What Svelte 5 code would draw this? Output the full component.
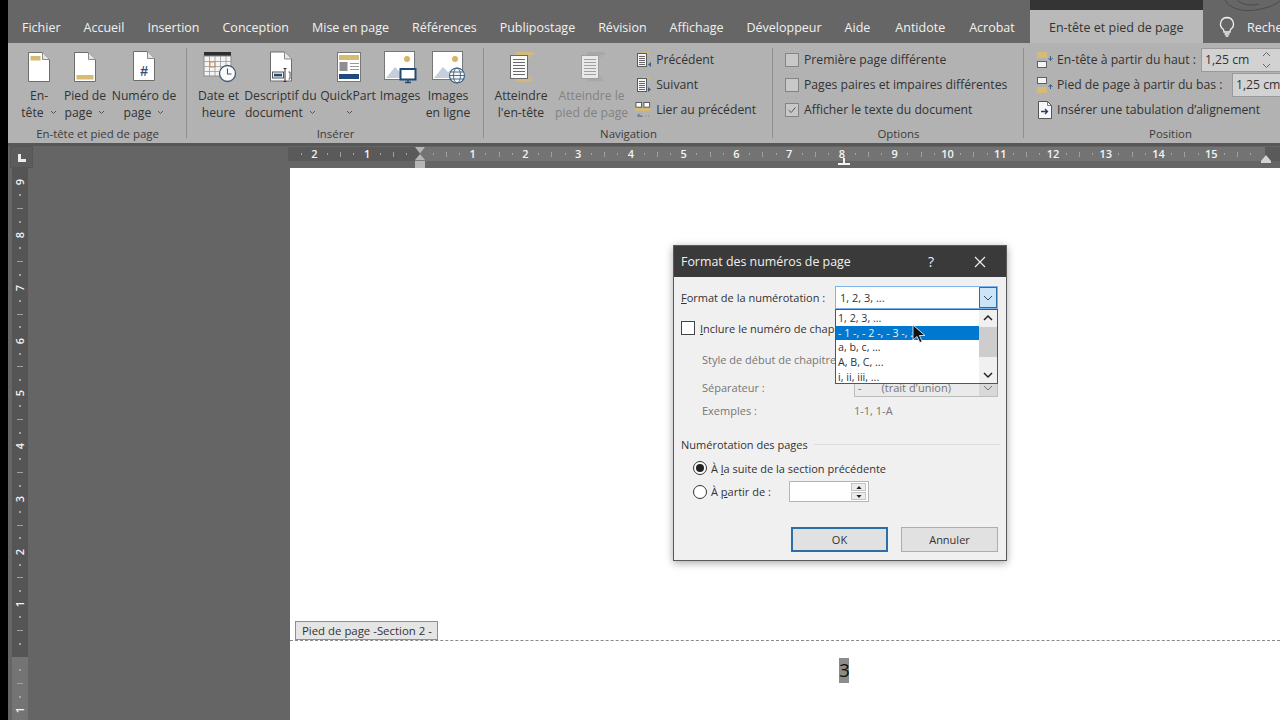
<script>
  const tabs = ['Fichier','Accueil','Insertion','Conception','Mise en page','Références','Publipostage','Révision','Affichage','Développeur','Aide','Antidote','Acrobat'];
  const step = (k) => (k % 4 === 0 ? 'num' : k % 2 === 0 ? 'dash' : 'dot');
  const range = (a, b) => { const r = []; if (a <= b) { for (let i = a; i <= b; i++) r.push(i); } else { for (let i = a; i >= b; i--) r.push(i); } return r; };
  const hLeft = range(-9, -1);
  const hMain = range(1, 63);
  const vTop = range(36, 1);
  const vLow = range(-1, -5);
</script>

{#snippet chev()}
  <svg class="chev" viewBox="0 0 7 5"><path d="M1 1l2.500 2.500L6 1" fill="none" stroke="#555" stroke-width="1"/></svg>
{/snippet}

{#snippet tick(k)}
  <span class="cell">
    {#if step(k) === 'num'}<b>{Math.abs(k / 4)}</b>{:else}<i class={step(k)}></i>{/if}
  </span>
{/snippet}

{#snippet sheet(bar)}
  <svg class="ic22" viewBox="0 0 22 30">
    <path d="M.5.5h14l7 7v22H.5z" fill="#fff" stroke="#6d6d6d"/>
    <path d="M14.500.5v7h7" fill="#e4e4e4" stroke="#8a8a8a"/>
    {#if bar === 'top'}<rect x="2.500" y="4" width="10" height="4.500" fill="#d6bb72"/>{/if}
    {#if bar === 'bottom'}<rect x="2.500" y="23" width="17" height="4.500" fill="#d6bb72"/>{/if}
  </svg>
{/snippet}

{#snippet gotoDoc(gold, paper, line)}
  <svg class="ic30" viewBox="0 0 30 32">
    <path d="M10 1h18v3H10zM10 27.500h16v3H10z" fill={gold} opacity=".85"/>
    <path d="M22 4h3v3h-3zM22 24.500h3v3h-3z" fill={gold} opacity=".4"/>
    <rect x="4.500" y="4.500" width="17" height="23" fill={paper} stroke={line}/>
    <path d="M7 8.500h12M7 11.500h12M7 14.500h12M7 17.500h12M7 20.500h12M7 23.500h12" stroke={line} stroke-width="1"/>
  </svg>
{/snippet}

{#snippet tinyDoc(up)}
  <svg class="ic16" viewBox="0 0 16 18">
    <path d="M6 1h7v2H6z" fill="#d6bb72"/>
    <rect x="1.500" y="2.500" width="9" height="13" fill="#f5f5f5" stroke="#5a5a5a"/>
    <path d="M3 5.500h6M3 7.500h6M3 9.500h6M3 11.500h6M3 13.500h6" stroke="#666"/>
    {#if up}<path d="M15 11v5l-3-2.500z" fill="#3a6288"/>{:else}<path d="M12 11v5l3-2.500z" fill="#3a6288"/>{/if}
  </svg>
{/snippet}

{#snippet gapIcon(top)}
  <svg class="ic18" viewBox="0 0 18 18">
    {#if top}
      <rect x="1" y="1" width="10" height="6" fill="#d6bb72"/>
      <rect x="1.500" y="10.500" width="9" height="6" fill="#f4f4f4" stroke="#5f5f5f"/>
      <path d="M14.500 5v4M12.500 7l2 2.500 2-2.500" fill="none" stroke="#3a6288"/>
    {:else}
      <rect x="1.500" y="1.500" width="9" height="6" fill="#f4f4f4" stroke="#5f5f5f"/>
      <rect x="1" y="11" width="10" height="6" fill="#d6bb72"/>
      <path d="M14.500 13V9M12.500 11l2-2.500 2 2.500" fill="none" stroke="#3a6288"/>
    {/if}
  </svg>
{/snippet}

<div class="screen">
  <div class="strip"></div>
  <div class="word">
    <header class="tabbar">
      {#each tabs as t}<span class="tab">{t}</span>{/each}
      <span class="tab active">En-tête et pied de page</span>
      <svg class="bulb" viewBox="0 0 18 22"><path d="M9 1.500a6.500 6.500 0 0 0-4 11.600c.8.700 1 1.700 1 2.900h6c0-1.200.2-2.200 1-2.900A6.500 6.500 0 0 0 9 1.500z" fill="none" stroke="#f2f2f2" stroke-width="1.300"/><path d="M6.500 18h5M7.500 20h3" stroke="#f2f2f2" stroke-width="1.300"/></svg>
      <span class="tab search">Rechercher</span>
      <svg class="swirl" viewBox="0 0 60 14"><path d="M2 0c4 8 16 12 30 10S54 4 58 0M14 0c5 5 14 6 22 4" fill="none" stroke="#4b4b4b"/></svg>
    </header>

    <section class="ribbon">
      <div class="group g1">
        <div class="items">
          <div class="big w46">{@render sheet('top')}<span>En-<br/>tête {@render chev()}</span></div>
          <div class="big w46">{@render sheet('bottom')}<span>Pied de<br/>page {@render chev()}</span></div>
          <div class="big w72">
            <div class="numdoc">{@render sheet('')}<em>#</em></div>
            <span>Numéro de<br/>page {@render chev()}</span>
          </div>
        </div>
        <div class="glabel">En-tête et pied de page</div>
      </div>

      <div class="group g2">
        <div class="items">
          <div class="big w47">
            <svg class="ic34" viewBox="0 0 34 32">
              <rect x="1" y="1" width="27" height="4" fill="#2e2e2e"/>
              <rect x="1" y="5" width="27" height="20" fill="#f4f4f4" stroke="#8c8c8c"/>
              <path d="M1 10.500h27M1 15.500h27M1 20.500h27M6.500 5v20M12 5v20M17.500 5v20M23 5v20" stroke="#9a9a9a" stroke-width=".8"/>
              <rect x="7" y="11" width="5" height="5" fill="none" stroke="#c98f5e"/>
              <circle cx="24.500" cy="22.500" r="8" fill="#fafafa" stroke="#44596f" stroke-width="1.300"/>
              <path d="M24.500 17.500v5.500h4" fill="none" stroke="#44596f" stroke-width="1.100"/>
            </svg>
            <span>Date et<br/>heure</span>
          </div>
          <div class="big w77">
            <svg class="ic26" viewBox="0 0 26 31">
              <path d="M2.500.500h14l7 7v22h-21z" fill="#fff" stroke="#6d6d6d"/>
              <path d="M16.500.500v7h7" fill="#e4e4e4" stroke="#8a8a8a"/>
              <rect x="4.500" y="20.500" width="11" height="6" fill="#f2f2f2" stroke="#555"/>
              <rect x="6" y="22.300" width="8" height="2.600" fill="#21457c"/>
              <path d="M15.500 17h3M17 17v13M15.500 30h3" stroke="#333" fill="none"/>
              <path d="M20.500 20.500h1.500v7h-1.500" stroke="#555" fill="none"/>
            </svg>
            <span>Descriptif du<br/>document {@render chev()}</span>
          </div>
          <div class="big w58">
            <svg class="ic24" viewBox="0 0 24 30">
              <rect x=".5" y=".5" width="23" height="29" fill="#fff" stroke="#777"/>
              <rect x="2" y="3" width="20" height="5" fill="#d6bb72"/>
              <rect x="2.500" y="10" width="8" height="9" fill="#8f8f8f"/>
              <path d="M13 11.500h9M13 14.500h9M13 17.500h9" stroke="#999"/>
              <rect x="2" y="22" width="20" height="5" fill="#1f4a80"/>
            </svg>
            <span>QuickPart<br/>{@render chev()}</span>
          </div>
          <div class="big w46">
            <svg class="ic32" viewBox="0 0 32 32">
              <rect x=".5" y=".5" width="30" height="28" fill="#fff" stroke="#777"/>
              <circle cx="23" cy="8" r="3" fill="#d9b36a"/>
              <path d="M2 27l9-11 5 5 3-2 6 8z" fill="#c3cfdc"/>
              <rect x="16.500" y="18" width="15" height="10.500" fill="#fff" stroke="#1f4a72" stroke-width="2"/>
              <path d="M21 31.500h6M24 29v2.500" stroke="#1f4a72" stroke-width="1.400"/>
            </svg>
            <span>Images</span>
          </div>
          <div class="big w50">
            <svg class="ic32" viewBox="0 0 32 32">
              <rect x=".5" y=".5" width="30" height="28" fill="#fff" stroke="#777"/>
              <circle cx="23" cy="8" r="3" fill="#d9b36a"/>
              <path d="M2 27l9-11 5 5 3-2 6 8z" fill="#c3cfdc"/>
              <circle cx="25" cy="24.500" r="7.500" fill="#f4f6f8" stroke="#3c5f80" stroke-width="1.100"/>
              <ellipse cx="25" cy="24.500" rx="3.500" ry="7.500" fill="none" stroke="#3c5f80" stroke-width=".9"/>
              <path d="M17.500 24.500h15M18.500 21h13M18.500 28h13" stroke="#3c5f80" stroke-width=".9"/>
            </svg>
            <span>Images<br/>en ligne</span>
          </div>
        </div>
        <div class="glabel">Insérer</div>
      </div>

      <div class="group g3">
        <div class="items">
          <div class="big w68">{@render gotoDoc('#d6bb72', '#fafafa', '#6a6a6a')}<span>Atteindre<br/>l'en-tête</span></div>
          <div class="big w72 off">{@render gotoDoc('#a6a6a6', '#e9e9e9', '#a0a0a0')}<span>Atteindre le<br/>pied de page</span></div>
          <div class="smalls">
            <div class="row">{@render tinyDoc(true)}Précédent</div>
            <div class="row">{@render tinyDoc(false)}Suivant</div>
            <div class="row link">
              <svg class="ic16" viewBox="0 0 17 18">
                <rect x="1" y="1" width="6" height="5" fill="#fff" stroke="#555"/>
                <rect x="9.500" y="1" width="6" height="5" fill="#fff" stroke="#555"/>
                <rect x="0" y="7" width="16.500" height="3" fill="#d6bb72"/>
                <path d="M3 15.500h5M5 13l-2.500 2.500" stroke="#2f5f8c" fill="none"/>
                <path d="M11 15.500h1M14 15.500h1" stroke="#777"/>
              </svg>
              Lier au précédent
            </div>
          </div>
        </div>
        <div class="glabel">Navigation</div>
      </div>

      <div class="group g4">
        <div class="items col">
          <div class="row"><i class="rbox"></i>Première page différente</div>
          <div class="row"><i class="rbox"></i>Pages paires et impaires différentes</div>
          <div class="row"><i class="rbox"><svg viewBox="0 0 14 14"><path d="M3 7l3 3 5-6" fill="none" stroke="#444"/></svg></i>Afficher le texte du document</div>
        </div>
        <div class="glabel">Options</div>
      </div>

      <div class="group g5">
        <div class="items col">
          <div class="row">{@render gapIcon(true)}<span class="rtext t1">En-tête à partir du haut :</span>
            <div class="num">1,25 cm
              <svg class="updown" viewBox="0 0 9 18"><path d="M1 5l3.500-3.500L8 5M1 13l3.500 3.500L8 13" fill="none" stroke="#666"/></svg>
            </div>
          </div>
          <div class="row">{@render gapIcon(false)}<span class="rtext t2">Pied de page à partir du bas :</span>
            <div class="num">1,25 cm</div>
          </div>
          <div class="row">
            <svg class="ic18" viewBox="0 0 18 18"><path d="M2.500.5h9l4 4v13h-13z" fill="#f8f8f8" stroke="#555"/><path d="M11.500.5v4h4" fill="none" stroke="#777"/><path d="M5 10.500h6M9 8l2.500 2.500L9 13" fill="none" stroke="#1f3f70" stroke-width="1.300"/></svg>
            <span class="rtext">Insérer une tabulation d’alignement</span>
          </div>
        </div>
        <div class="glabel pos">Position</div>
      </div>
    </section>

    <div class="rulerrow">
      <div class="corner"><svg viewBox="0 0 8 8"><path d="M0 0h3v5h5v3H0z" fill="#ececec"/></svg></div>
      <div class="hruler">
        <div class="hseg dark">{#each hLeft as k}{@render tick(k)}{/each}</div>
        <div class="hseg light">{#each hMain as k}{@render tick(k)}{/each}</div>
        <div class="hseg end"></div>
        <svg class="indent" viewBox="0 0 12 21"><path d="M1 0h10L6 6.500zM6 7l5 6v8H1v-8z" fill="#b5b5b5"/><path d="M1 13.500h10" stroke="#7a7a7a"/></svg>
        <svg class="tabstop" viewBox="0 0 12 7"><path d="M5 0h2v5h5v2H0V5h5z" fill="#f2f2f2"/></svg>
        <svg class="rindent" viewBox="0 0 10 8"><path d="M5 0l5 6v2H0V6z" fill="#d4d4d4"/></svg>
      </div>
    </div>

    <div class="work">
      <div class="vruler">
        <div class="vseg vdark">{#each vTop as k}{@render tick(k)}{/each}</div>
        <div class="vseg vlight">{#each vLow as k}{@render tick(k)}{/each}</div>
      </div>
      <main class="page">
        <div class="footerline"><span class="ftag">Pied de page -Section 2 -</span></div>
        <p class="pnum"><span>3</span></p>
      </main>
    </div>
  </div>

  <div class="dialog">
    <div class="dtitle">
      <span>Format des numéros de page</span>
      <b>?</b>
      <svg viewBox="0 0 12 12"><path d="M1 1l10 10M11 1L1 11" stroke="#f2f2f2" stroke-width="1.100"/></svg>
    </div>
    <div class="dbody">
      <div class="drow r1">
        <span class="dl"><u>F</u>ormat de la numérotation :</span>
        <div class="combo">
          <span>1, 2, 3, ...</span>
          <i class="carrow"><svg viewBox="0 0 10 6"><path d="M1 1l4 4 4-4" fill="none" stroke="#444"/></svg></i>
        </div>
      </div>
      <div class="drow r2"><i class="cb"></i><span><u>I</u>nclure le numéro de chapitre</span></div>
      <div class="drow r3 grey"><span>Style de début de chapitre</span></div>
      <div class="drow r4 grey">
        <span class="lab">Séparateur :</span>
        <div class="dis"><span>-</span><span class="tu">(trait d'union)</span><i class="disarrow"><svg viewBox="0 0 10 6"><path d="M1 1l4 4 4-4" fill="none" stroke="#777"/></svg></i></div>
      </div>
      <div class="drow r5 grey"><span class="lab">Exemples :</span><span>1-1, 1-A</span></div>
      <div class="drow r6"><span>Numérotation des pages</span><hr/></div>
      <div class="drow r7"><i class="radio on"></i><span>À <u>l</u>a suite de la section précédente</span></div>
      <div class="drow r8">
        <i class="radio"></i><span class="from">À <u>p</u>artir de :</span>
        <div class="spin">
          <i class="sp"><svg viewBox="0 0 7 4"><path d="M3.500 0L7 4H0z" fill="#222"/></svg></i>
          <i class="sp"><svg viewBox="0 0 7 4"><path d="M0 0h7L3.500 4z" fill="#222"/></svg></i>
        </div>
      </div>
      <div class="drow r9">
        <button class="btn ok">OK</button>
        <button class="btn">Annuler</button>
      </div>
    </div>

    <div class="list">
      <div class="opts">
        <div>1, 2, 3, ...</div>
        <div class="sel">- 1 -, - 2 -, - 3 -, ...</div>
        <div>a, b, c, ...</div>
        <div>A, B, C, ...</div>
        <div>i, ii, iii, ...</div>
      </div>
      <div class="sbar">
        <svg viewBox="0 0 10 6"><path d="M1 5l4-4 4 4" fill="none" stroke="#222" stroke-width="1.500"/></svg>
        <i class="thumb"></i>
        <svg viewBox="0 0 10 6"><path d="M1 1l4 4 4-4" fill="none" stroke="#222" stroke-width="1.500"/></svg>
      </div>
    </div>
    <svg class="cursor" viewBox="0 0 14 20"><path d="M1 1v15l4-3.500 2.800 6 2.400-1-2.800-6H13z" fill="#111" stroke="#fff" stroke-width=".8"/></svg>
  </div>
</div>

<style>
  :global(body) { margin: 0; }
  .screen { position: relative; display: flex; width: 1280px; height: 720px; overflow: hidden; background: #656565; font-family: "Open Sans", "Noto Sans", sans-serif; font-size: 12.2px; color: #333; }
  .strip { flex: 0 0 8px; background: #000; }
  .word { flex: 1; min-width: 0; display: flex; flex-direction: column; }
  svg { display: block; overflow: visible; }

  .tabbar { position: relative; flex: 0 0 43px; display: flex; gap: 23px; padding-left: 14px; background: #666; white-space: nowrap; overflow: hidden; font-size: 12.5px; }
  .tab { padding-top: 19px; color: #f1f1f1; line-height: 17px; }
  .tab:nth-child(12) { margin-left: 2px; }
  .tab:nth-child(13) { margin-left: 1px; }
  .tab.active { margin-left: -8px; padding: 9px 15px 0; border-top: 10px solid #343434; background: #b9b9b9; color: #333; width: 173px; box-sizing: border-box; text-align: center; }
  .bulb { position: absolute; left: 1210px; top: 16px; width: 18px; height: 22px; }
  .tab.search { position: absolute; left: 1239px; top: 0; }
  .swirl { position: absolute; left: 1215px; top: 0; width: 60px; height: 14px; }

  .ribbon { flex: 0 0 100px; display: flex; background: #b2b2b2; border-bottom: 3px solid #575757; white-space: nowrap; }
  .group { display: flex; flex-direction: column; box-sizing: border-box; position: relative; }
  .group::after { content: ""; position: absolute; right: 0; top: 5px; bottom: 5px; width: 1px; background: #8e8e8e; }
  .g1 { flex: 0 0 179px; }
  .g2 { flex: 0 0 297px; }
  .g3 { flex: 0 0 289px; }
  .g4 { flex: 0 0 251px; }
  .g5 { flex: 1; min-width: 0; }
  .g5::after { display: none; }
  .items { flex: 0 0 82px; display: flex; box-sizing: border-box; }
  .g1 .items { padding-left: 8px; }
  .g2 .items { padding-left: 8px; }
  .g3 .items { padding-left: 3px; }
  .g4 .items { padding-left: 12px; }
  .g5 .items { padding-left: 12px; }
  .col { flex-direction: column; padding-top: 4px; }
  .glabel { text-align: center; font-size: 11.4px; line-height: 18px; color: #3b3b3b; }
  .glabel.pos { padding-left: 37px; }

  .big { display: flex; flex-direction: column; align-items: center; padding-top: 8px; text-align: center; line-height: 17px; box-sizing: border-box; }
  .big > svg, .numdoc { height: 32px; margin-bottom: 4px; }
  .big > span { display: block; }
  .w46 { flex: 0 0 46px; } .w47 { flex: 0 0 47px; } .w50 { flex: 0 0 50px; } .w58 { flex: 0 0 58px; }
  .w68 { flex: 0 0 68px; } .w72 { flex: 0 0 72px; } .w77 { flex: 0 0 77px; }
  .big.off { color: #828282; }
  .ic22 { width: 22px; } .ic24 { width: 24px; margin-left: 2px; } .ic26 { width: 26px; } .ic30 { width: 30px; } .ic32 { width: 32px; } .ic34 { width: 34px; margin-left: 3px; }
  .numdoc { position: relative; width: 22px; }
  .numdoc .ic22 { height: 30px; }
  .numdoc em { position: absolute; left: 0; right: 0; top: 12px; text-align: center; font: italic 700 14px/16px "Liberation Sans", sans-serif; color: #2c4f7e; }
  .chev { display: inline-block; width: 7px; height: 5px; margin: 0 0 2px 3px; vertical-align: middle; }

  .smalls { flex: 1; padding: 4px 0 0 8px; }
  .row { height: 25px; display: flex; align-items: center; }
  .ic16 { flex: 0 0 16px; width: 16px; height: 18px; margin-right: 4px; }
  .link .ic16 { margin-left: -1px; margin-right: 5px; }
  .rbox { flex: 0 0 14px; width: 14px; height: 14px; box-sizing: border-box; border: 1px solid #848484; background: #c8c8c8; margin-right: 5px; }
  .ic18 { flex: 0 0 18px; width: 18px; height: 18px; margin-right: 3px; }
  .t1 { flex: 0 0 144px; }
  .t2 { flex: 0 0 175px; }
  .num { display: flex; align-items: center; box-sizing: border-box; height: 24px; padding: 0 3px; flex: 0 0 80px; background: #d2d2d2; border: 1px solid #9a9a9a; }
  .updown { width: 9px; height: 18px; margin-left: 13px; }

  .rulerrow { flex: 0 0 22px; display: flex; position: relative; overflow: hidden; }
  .corner { flex: 0 0 23px; height: 22px; margin-left: 2px; background: #5c5c5c; box-sizing: border-box; border: 1px solid #555; display: flex; align-items: center; justify-content: center; }
  .corner svg { width: 8px; height: 8px; margin: 2px 0 0 0; }
  .hruler { position: relative; display: flex; margin: 1px 0 0 255px; height: 14px; flex: 1; min-width: 0; }
  .hseg { display: flex; height: 14px; box-sizing: border-box; }
  .dark { background: #5a5a5a; padding: 0 6.6px; flex: 0 0 132px; }
  .light { background: #737373; padding: 0 6.6px; flex: 0 0 845px; }
  .end { background: #5a5a5a; flex: 1; }
  .cell { flex: 0 0 13.2px; display: flex; align-items: center; justify-content: center; color: #f4f4f4; }
  .cell b { font-size: 11px; font-weight: 600; line-height: 14px; }
  .dot { width: 1px; height: 2px; background: #a4a4a4; }
  .dash { width: 1px; height: 5px; background: #a0a0a0; }
  .indent { position: absolute; left: 126px; top: 0; width: 12px; height: 21px; }
  .tabstop { position: absolute; left: 550px; top: 11px; width: 12px; height: 7px; }
  .rindent { position: absolute; left: 973px; top: 8px; width: 10px; height: 8px; }

  .work { flex: 1; min-height: 0; display: flex; }
  .vruler { flex: 0 0 16px; margin-left: 4px; display: flex; flex-direction: column; }
  .vseg { display: flex; flex-direction: column; box-sizing: border-box; }
  .vdark { background: #555; padding-top: 6px; flex: 0 0 489px; justify-content: flex-end; padding-bottom: 6.6px; }
  .vlight { background: #747474; padding-top: 6.6px; flex: 1; overflow: hidden; }
  .vseg .cell { flex: 0 0 13.2px; height: 13.2px; }
  .vseg .cell b { transform: rotate(-90deg); }
  .vseg .dot { width: 2px; height: 2px; }
  .vseg .dash { width: 6px; height: 1px; }
  .page { flex: 1; margin-left: 262px; background: #fff; display: flex; flex-direction: column; min-width: 0; }
  .footerline { margin-top: 453px; height: 19px; border-bottom: 1px dashed #8a8a8a; display: flex; padding-left: 5px; }
  .ftag { height: 19px; box-sizing: border-box; border: 1px solid #8e8e8e; background: #e5e5e5; font-size: 11.400px; line-height: 17px; padding: 0 6px; width: 143px; white-space: nowrap; }
  .pnum { margin: 17px 0 0; padding-left: 549px; }
  .pnum span { display: block; width: 10px; height: 25px; background: #8c8c8c; font-size: 19px; line-height: 25px; color: #111; text-align: center; }

  .dialog { position: absolute; left: 673px; top: 245px; width: 334px; height: 316px; box-sizing: border-box; border: 1px solid #5a5a5a; background: #f0f0f0; box-shadow: 0 2px 8px rgba(0,0,0,.35); font-size: 11px; color: #333; display: flex; flex-direction: column; }
  .dtitle { flex: 0 0 31px; background: #3a3a3a; color: #f0f0f0; display: flex; align-items: center; padding-left: 7px; font-size: 12.400px; }
  .dtitle span { flex: 1; }
  .dtitle b { font-weight: 400; font-size: 14px; width: 12px; margin-right: 34px; }
  .dtitle svg { width: 12px; height: 12px; margin-right: 20px; }
  .dbody { flex: 1; padding: 0 8px 0 7px; display: flex; flex-direction: column; white-space: nowrap; }
  .drow { display: flex; align-items: center; box-sizing: border-box; }
  .r1 { margin-top: 9px; height: 23px; }
  .dl { flex: 0 0 154px; }
  .combo { flex: 1; height: 23px; box-sizing: border-box; background: #fff; border: 1px solid #7eb4ea; display: flex; align-items: center; justify-content: space-between; padding-left: 4px; }
  .carrow { width: 18px; height: 21px; box-sizing: border-box; background: #cce4f7; border: 1px solid #2c6c9e; display: flex; align-items: center; justify-content: center; }
  .carrow svg, .disarrow svg { width: 10px; height: 6px; }
  .r2 { margin-top: 12px; height: 14px; }
  .cb { width: 14px; height: 14px; box-sizing: border-box; background: #fff; border: 1px solid #444; margin-right: 5px; }
  .grey { color: #767676; padding-left: 21px; }
  .r3 { margin-top: 14px; height: 20px; }
  .r4 { margin-top: 9px; height: 19px; }
  .lab { flex: 0 0 152px; }
  .dis { flex: 1; height: 19px; box-sizing: border-box; border: 1px solid #bdbdbd; background: #eaeaea; display: flex; align-items: center; padding-left: 3px; }
  .tu { margin-left: 20px; flex: 1; }
  .disarrow { width: 18px; height: 17px; background: #d8d8d8; display: flex; align-items: center; justify-content: center; }
  .r5 { margin-top: 4px; height: 18px; }
  .r6 { margin-top: 16px; height: 18px; }
  .r6 hr { flex: 1; margin: 0 -2px 0 6px; border: 0; border-top: 1px solid #dcdcdc; }
  .r7 { margin-top: 6px; height: 18px; padding-left: 12px; }
  .r8 { margin-top: 4px; height: 21px; padding-left: 12px; }
  .radio { position: relative; width: 14px; height: 14px; box-sizing: border-box; border-radius: 50%; border: 1px solid #333; background: #fff; margin-right: 4px; }
  .radio.on::after { content: ""; position: absolute; inset: 2px; border-radius: 50%; background: #222; }
  .from { flex: 0 0 78px; }
  .spin { width: 80px; height: 21px; box-sizing: border-box; border: 1px solid #b5b5b5; background: #fff; display: flex; flex-direction: column; align-items: flex-end; justify-content: center; padding-right: 2px; gap: 1px; }
  .sp { width: 15px; height: 8px; background: #ececec; border: 1px solid #c4c4c4; box-sizing: border-box; display: flex; align-items: center; justify-content: center; }
  .sp svg { width: 6px; height: 3px; }
  .r9 { margin-top: 25px; height: 25px; justify-content: flex-end; gap: 13px; }
  .btn { width: 97px; height: 25px; box-sizing: border-box; background: #e1e1e1; border: 1px solid #adadad; font: inherit; color: #333; padding: 0; }
  .btn.ok { border: 2px solid #2a6fa8; }

  .list { position: absolute; left: 161px; top: 63px; width: 163px; height: 75px; box-sizing: border-box; background: #fff; border: 1px solid #555; display: flex; font-size: 10.700px; color: #333; }
  .opts { flex: 0 0 143px; padding-top: 1px; }
  .opts div { height: 14.700px; line-height: 14.700px; padding-left: 2px; white-space: nowrap; overflow: hidden; }
  .opts .sel { background: #0078d0; color: #e8f3fb; }
  .sbar { flex: 1; background: #f0f0f0; display: flex; flex-direction: column; align-items: center; justify-content: space-between; padding: 5px 0; }
  .sbar svg { width: 10px; height: 6px; }
  .thumb { width: 100%; height: 30px; background: #cdcdcd; margin-bottom: 9px; }
  .cursor { position: absolute; left: 238px; top: 78px; width: 14px; height: 20px; }
</style>
